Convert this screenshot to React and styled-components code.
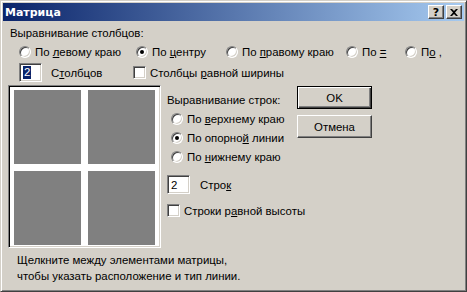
import React from 'react';
import styled, { createGlobalStyle } from 'styled-components';

const GlobalStyle = createGlobalStyle`
  html, body {
    margin: 0;
    padding: 0;
    background: #d4d0c8;
  }
  body {
    font-family: "Liberation Sans", Arial, sans-serif;
    font-size: 11.4px;
    color: #000;
  }
`;

const Window = styled.div`
  width: 467px;
  height: 292px;
  box-sizing: border-box;
  background: #d4d0c8;
  border: 1px solid;
  border-color: #d4d0c8 #404040 #404040 #d4d0c8;
  box-shadow: inset 1px 1px #fff, inset -1px -1px #808080;
  padding: 2px;
  display: flex;
  flex-direction: column;
`;

const TitleBar = styled.div`
  height: 18px;
  display: flex;
  align-items: center;
  padding: 0 2px;
  background: linear-gradient(to right, #0a246a, #a6caf0);
  color: #fff;
  font-family: "DejaVu Sans", Tahoma, sans-serif;
  font-weight: bold;
  font-size: 11px;
`;

const Title = styled.div`
  flex: 1;
`;

const TitleButtons = styled.div`
  display: flex;
  gap: 2px;
`;

const CaptionButton = styled.div`
  width: 16px;
  height: 14px;
  box-sizing: border-box;
  background: #d4d0c8;
  border: 1px solid;
  border-color: #fff #404040 #404040 #fff;
  box-shadow: inset -1px -1px #808080;
  display: flex;
  align-items: center;
  justify-content: center;
  color: #000;
  font-weight: bold;
  font-size: 11px;
  line-height: 1;
`;

const Content = styled.div`
  display: flex;
  flex-direction: column;
  padding-left: 5px;
`;

const GroupLabel = styled.div`
  margin: ${p => p.$mt || 0}px 0 0 ${p => p.$ml || 0}px;
  line-height: 13px;
  white-space: nowrap;
`;

const RadioRow = styled.div`
  display: grid;
  grid-template-columns: 117px 90px 120px 59px auto;
  margin: 4px 0 0 11px;
  height: 16px;
  align-items: center;
`;

const OptionLine = styled.label`
  display: flex;
  align-items: center;
  gap: 4px;
  white-space: nowrap;
  height: ${p => p.$h || 16}px;
`;

const RadioCircle = styled.span`
  width: 12px;
  height: 12px;
  box-sizing: border-box;
  border-radius: 50%;
  border: 1px solid;
  border-color: #808080 #fff #fff #808080;
  box-shadow: inset 1px 1px #404040, inset -1px -1px #d4d0c8;
  background: #fff;
  display: flex;
  align-items: center;
  justify-content: center;
  flex: none;

  &::after {
    content: '';
    width: 4px;
    height: 4px;
    border-radius: 50%;
    background: ${p => (p.$on ? '#000' : 'transparent')};
  }
`;

const CheckBox = styled.span`
  width: 13px;
  height: 13px;
  box-sizing: border-box;
  border: 1px solid;
  border-color: #808080 #fff #fff #808080;
  box-shadow: inset 1px 1px #404040, inset -1px -1px #d4d0c8;
  background: #fff;
  flex: none;
`;

const CountRow = styled.div`
  display: flex;
  align-items: center;
  margin: ${p => p.$mt || 0}px 0 0 ${p => p.$ml || 0}px;
  height: 19px;
`;

const NumBox = styled.div`
  width: 23px;
  height: 19px;
  box-sizing: border-box;
  border: 1px solid;
  border-color: #808080 #fff #fff #808080;
  box-shadow: inset 1px 1px #404040, inset -1px -1px #d4d0c8;
  background: #fff;
  display: flex;
  align-items: center;
  padding-left: 3px;
  flex: none;
`;

const Selected = styled.span`
  background: #0a246a;
  color: #fff;
  line-height: 13px;
  padding: 0 1px;
`;

const CountLabel = styled.span`
  margin-left: ${p => p.$ml || 10}px;
  width: ${p => p.$w || 'auto'};
  white-space: nowrap;
`;

const MainRow = styled.div`
  display: flex;
  margin-top: 3px;
`;

const Preview = styled.div`
  width: 153px;
  height: 163px;
  box-sizing: border-box;
  border: 1px solid;
  border-color: #808080 #fff #fff #808080;
  box-shadow: inset 1px 1px #000, inset -1px -1px #d4d0c8;
  background: #fff;
  display: grid;
  grid-template-columns: 67px 67px;
  grid-template-rows: 74px 74px;
  gap: 7px;
  padding: 4px 4px 2px 5px;
  flex: none;
`;

const Cell = styled.div`
  background: #808080;
`;

const MiddleColumn = styled.div`
  width: 130px;
  margin-left: 6px;
  display: flex;
  flex-direction: column;
`;

const RowRadios = styled.div`
  display: flex;
  flex-direction: column;
  margin: 2px 0 0 4px;
`;

const Buttons = styled.div`
  display: flex;
  flex-direction: column;
  gap: 6px;
  margin-top: 1px;
`;

const Button = styled.div`
  width: 75px;
  height: 23px;
  box-sizing: border-box;
  background: #d4d0c8;
  border: 1px solid;
  border-color: ${p => (p.$default ? '#000' : '#fff #404040 #404040 #fff')};
  box-shadow: ${p =>
    p.$default
      ? 'inset 1px 1px #fff, inset -1px -1px #404040, inset -2px -2px #808080'
      : 'inset -1px -1px #808080'};
  display: flex;
  align-items: center;
  justify-content: center;
`;

const Hint = styled.div`
  margin: 4px 0 0 9px;
  line-height: 16px;
`;

const Matrix = () => (
  <Window>
    <TitleBar>
      <Title>Матрица</Title>
      <TitleButtons>
        <CaptionButton>?</CaptionButton>
        <CaptionButton>
          <svg width="8" height="7" viewBox="0 0 8 7">
            <path d="M0 0h2l2 2 2-2h2L5 3.5 8 7H6L4 5 2 7H0l3-3.5z" fill="#000" />
          </svg>
        </CaptionButton>
      </TitleButtons>
    </TitleBar>
    <Content>
      <GroupLabel $mt={6} $ml={2}>Выравнивание столбцов:</GroupLabel>
      <RadioRow>
        <OptionLine><RadioCircle /><span>По <u>л</u>евому краю</span></OptionLine>
        <OptionLine><RadioCircle $on /><span>По <u>ц</u>ентру</span></OptionLine>
        <OptionLine><RadioCircle /><span>По <u>п</u>равому краю</span></OptionLine>
        <OptionLine><RadioCircle /><span>По <u>=</u></span></OptionLine>
        <OptionLine><RadioCircle /><span>П<u>о</u> ,</span></OptionLine>
      </RadioRow>
      <CountRow $mt={3} $ml={11}>
        <NumBox><Selected>2</Selected></NumBox>
        <CountLabel $ml={9} $w="82px">С<u>т</u>олбцов</CountLabel>
        <OptionLine><CheckBox /><span>Столбцы <u>р</u>авной ширины</span></OptionLine>
      </CountRow>
      <MainRow>
        <Preview>
          <Cell />
          <Cell />
          <Cell />
          <Cell />
        </Preview>
        <MiddleColumn>
          <GroupLabel $mt={9}>Выравнивание строк:</GroupLabel>
          <RowRadios>
            <OptionLine $h={19}><RadioCircle /><span>По <u>в</u>ерхнему краю</span></OptionLine>
            <OptionLine $h={19}><RadioCircle $on /><span>По опорно<u>й</u> линии</span></OptionLine>
            <OptionLine $h={19}><RadioCircle /><span>По <u>н</u>ижнему краю</span></OptionLine>
          </RowRadios>
          <CountRow $mt={9} $ml={0}>
            <NumBox>2</NumBox>
            <CountLabel $ml={10}>Стро<u>к</u></CountLabel>
          </CountRow>
          <CountRow $mt={7} $ml={0}>
            <OptionLine><CheckBox /><span>Строки р<u>а</u>вной высоты</span></OptionLine>
          </CountRow>
        </MiddleColumn>
        <Buttons>
          <Button $default>OK</Button>
          <Button>Отмена</Button>
        </Buttons>
      </MainRow>
      <Hint>
        Щелкните между элементами матрицы,
        <br />
        чтобы указать расположение и тип линии.
      </Hint>
    </Content>
  </Window>
);

export default function App() {
  return (
    <>
      <GlobalStyle />
      <Matrix />
    </>
  );
}
